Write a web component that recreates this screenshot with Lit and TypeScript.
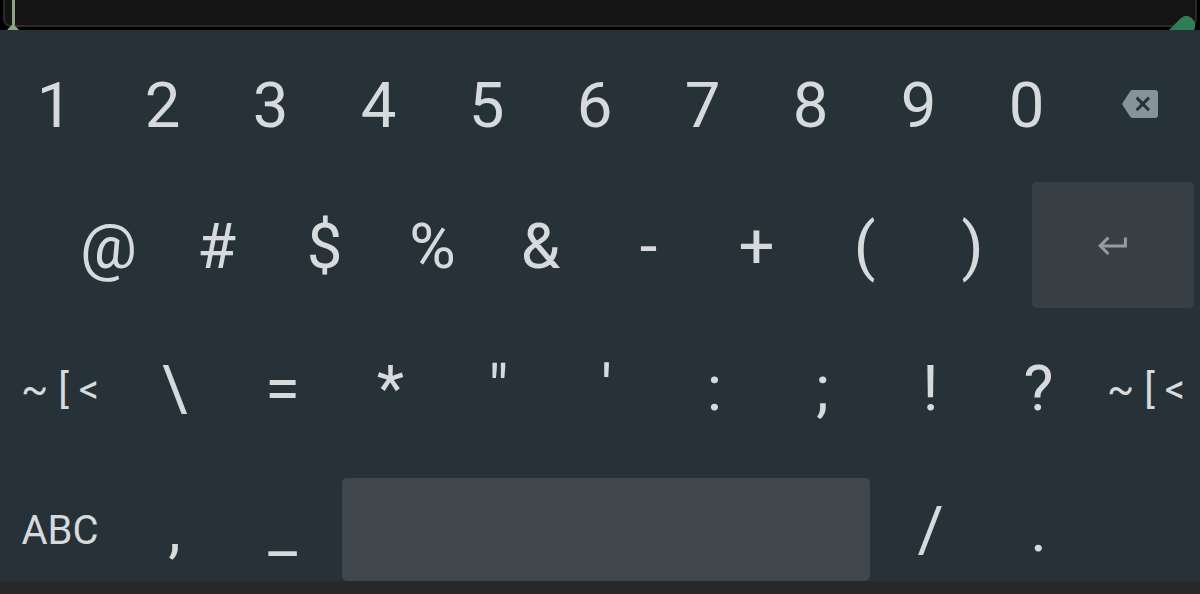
import { LitElement, css, html, svg } from "lit";
import { customElement, property } from "lit/decorators.js";

type Kind = "char" | "label" | "space" | "enter" | "backspace";

interface Key {
  text?: string;
  kind?: Kind;
}

const chars = (s: string): Key[] => [...s].map((text) => ({ text }));

const ROWS: Array<{ name: string; keys: Key[] }> = [
  { name: "digits", keys: [...chars("1234567890"), { kind: "backspace" }] },
  { name: "symbols", keys: [...chars("@#$%&-+()"), { kind: "enter" }] },
  {
    name: "marks",
    keys: [
      { text: "~ [ <", kind: "label" },
      ...chars("\\=*\"':;!?"),
      { text: "~ [ <", kind: "label" },
    ],
  },
  {
    name: "bottom",
    keys: [
      { text: "ABC", kind: "label" },
      ...chars(",_"),
      { kind: "space" },
      ...chars("/."),
    ],
  },
];

const backspaceIcon = svg`
  <svg width="36" height="28" viewBox="0 0 36 28" aria-hidden="true">
    <path fill="#87939a" d="M10.5 0H33a3 3 0 0 1 3 3V25a3 3 0 0 1-3 3H10.5a3 3 0 0 1-2.5-1.4L0 14 8 1.4A3 3 0 0 1 10.5 0Z"/>
    <path stroke="#273238" stroke-width="3" fill="none" d="M14.6 7.6 27 20.2M27 7.6 14.6 20.2"/>
  </svg>
`;

const enterIcon = svg`
  <svg width="30" height="20" viewBox="0 0 30 20" aria-hidden="true">
    <path fill="none" stroke="#959b9e" stroke-width="3" d="M27.4 1.5V10H2.5M10.4 1.6 2.2 9.8 10.4 18"/>
  </svg>
`;

@customElement("key-cap")
export class KeyCap extends LitElement {
  @property({ type: String }) kind: Kind = "char";
  @property({ type: String }) text = "";

  render() {
    switch (this.kind) {
      case "backspace":
        return html`<div class="key backspace">${backspaceIcon}</div>`;
      case "enter":
        return html`<div class="key enter">${enterIcon}</div>`;
      case "space":
        return html`<div class="key space"></div>`;
      default:
        return html`<div class="key ${this.kind}">${this.text}</div>`;
    }
  }

  static styles = css`
    :host {
      display: flex;
      min-width: 0;
    }
    .key {
      flex: 1;
      display: flex;
      align-items: center;
      justify-content: center;
      white-space: pre;
      line-height: 1;
      border-radius: 5px;
    }
    .char {
      padding: var(--char-drop, 0) 0 0 1px;
      font-size: 63.5px;
    }
    .label {
      padding-top: 2px;
      font-size: 40px;
    }
    .backspace {
      padding-bottom: 2px;
    }
    .enter {
      margin: 6px 6px 10px;
      background: #384045;
      padding-top: 1px;
    }
    .space {
      margin: 0 6px;
      background: #3f464c;
    }
    svg {
      display: block;
    }
  `;
}

@customElement("app-root")
export class AppRoot extends LitElement {
  render() {
    return html`
      <div class="field">
        <div class="box"></div>
        <div class="caret"></div>
        <svg class="handle" width="12" height="6" viewBox="0 0 12 6">
          <path fill="#91a282" d="M0 6 4.5 1.2Q6-.4 7.5 1.2L12 6Z" />
        </svg>
        <svg class="fab" width="27" height="15" viewBox="0 0 27 15">
          <path fill="#2f7d57" d="M0 15 11.5 3.5Q16.5-1.5 22 2.5L26 7V13L25 15Z" />
        </svg>
      </div>
      <div class="keyboard">
        ${ROWS.map(
          (row) => html`
            <div class="row ${row.name}">
              ${row.keys.map(
                (k) => html`<key-cap .kind=${k.kind ?? "char"} .text=${k.text ?? ""}></key-cap>`,
              )}
            </div>
          `,
        )}
      </div>
      <div class="nav"></div>
    `;
  }

  static styles = css`
    :host {
      display: flex;
      flex-direction: column;
      height: 594px;
      overflow: hidden;
      background: #000;
      color: #d7dadc;
      font-family: Roboto, "Liberation Sans", sans-serif;
    }
    .field {
      position: relative;
      flex: none;
      height: 30px;
      padding: 0 3px;
      box-sizing: border-box;
      overflow: hidden;
    }
    .box {
      height: 27px;
      box-sizing: border-box;
      background: #141414;
      border: 2px solid #2d2926;
      border-top: 0;
      border-radius: 0 0 8px 8px;
    }
    .caret {
      position: absolute;
      left: 12px;
      top: 0;
      width: 3px;
      height: 25px;
      background: #91a282;
    }
    .handle {
      position: absolute;
      left: 7px;
      bottom: 0;
    }
    .fab {
      position: absolute;
      right: 4px;
      bottom: 0;
    }
    .keyboard {
      flex: none;
      height: 551px;
      box-sizing: border-box;
      padding-top: 4px;
      background: #273238;
      display: grid;
      grid-template-rows: 142px 142px 141px 122px;
    }
    .row {
      display: grid;
    }
    .digits {
      --char-drop: 2px;
      grid-template-columns: repeat(10, 108px) 120px;
    }
    .symbols {
      padding-left: 54px;
      grid-template-columns: repeat(9, 108px) 174px;
    }
    .marks {
      grid-template-columns: 120px repeat(9, 108px) 108px;
    }
    .bottom {
      --char-drop: 1px;
      padding-top: 19px;
      grid-template-columns: 120px repeat(2, 108px) 540px repeat(2, 108px);
    }
    .nav {
      flex: 1;
      background: #282828;
    }
  `;
}

declare global {
  interface HTMLElementTagNameMap {
    "app-root": AppRoot;
    "key-cap": KeyCap;
  }
}
